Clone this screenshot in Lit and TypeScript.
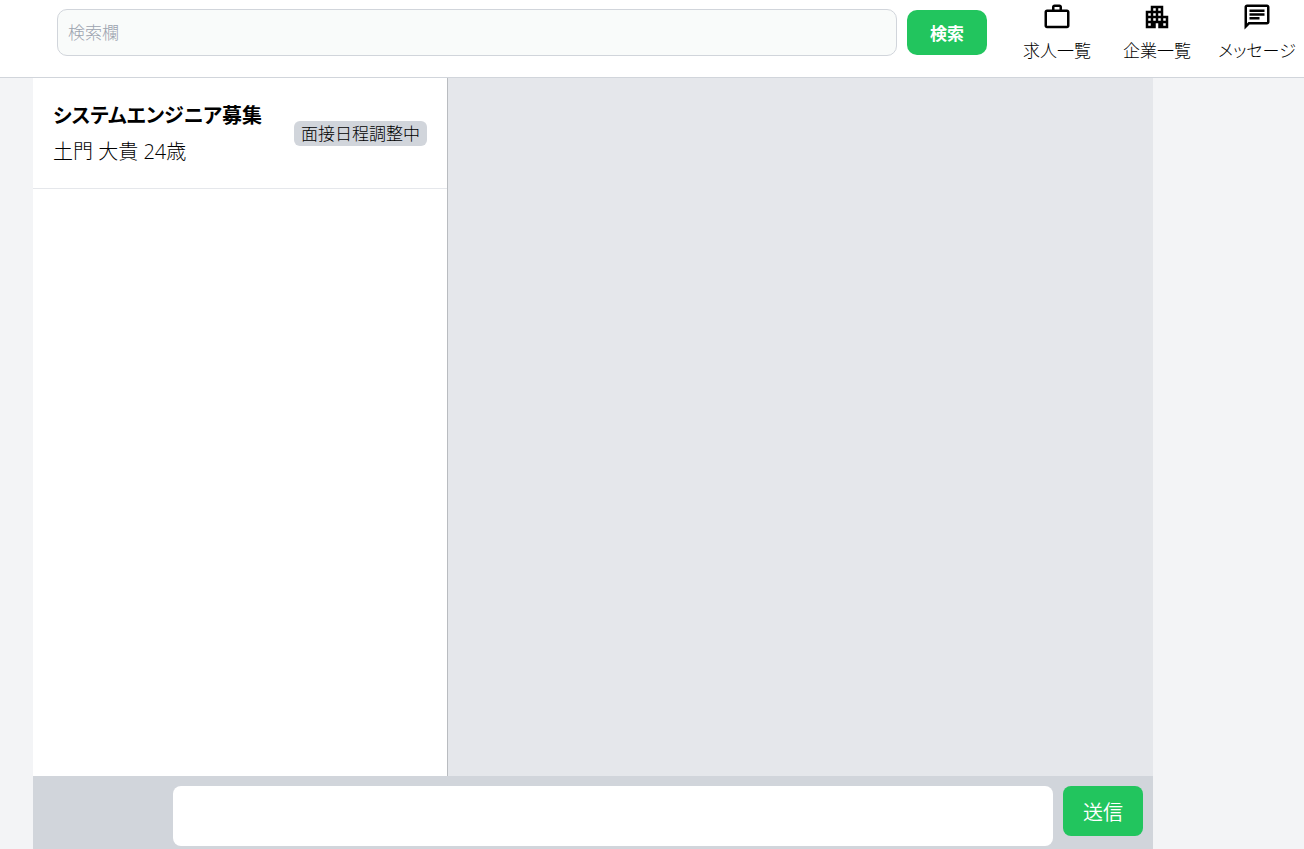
import { LitElement, html, css, svg } from "lit";
import { customElement } from "lit/decorators.js";

interface NavItem {
  label: string;
  path: string;
}

const NAV: NavItem[] = [
  {
    label: "求人一覧",
    path: "M14 6V4h-4v2h4zM4 8v11h16V8H4zm16-2c1.11 0 2 .89 2 2v11c0 1.11-.89 2-2 2H4c-1.11 0-2-.89-2-2l.01-11c0-1.11.88-2 1.99-2h4V4c0-1.11.89-2 2-2h4c1.11 0 2 .89 2 2v2h4z",
  },
  {
    label: "企業一覧",
    path: "M17 11V3H7v4H3v14h8v-4h2v4h8V11h-4zM7 19H5v-2h2v2zm0-4H5v-2h2v2zm0-4H5V9h2v2zm4 4H9v-2h2v2zm0-4H9V9h2v2zm0-4H9V5h2v2zm4 8h-2v-2h2v2zm0-4h-2V9h2v2zm0-4h-2V5h2v2zm4 12h-2v-2h2v2zm0-4h-2v-2h2v2z",
  },
  {
    label: "メッセージ",
    path: "M4 4h16v12H5.17L4 17.17V4m0-2c-1.1 0-1.99.9-1.99 2L2 22l4-4h14c1.1 0 2-.9 2-2V4c0-1.1-.9-2-2-2H4zm2 10h8v2H6v-2zm0-3h12v2H6V9zm0-3h12v2H6V6z",
  },
];

const THREADS = [
  { title: "システムエンジニア募集", person: "土門 大貴 24歳", status: "面接日程調整中" },
];

@customElement("app-root")
export class AppRoot extends LitElement {
  static styles = css`
    :host {
      display: flex;
      flex-direction: column;
      height: 100vh;
      overflow: hidden;
      background: #f3f4f6;
      color: #000;
      font-family: "Open Sans", "Noto Sans CJK JP", sans-serif;
      font-weight: 300;
      font-feature-settings: "palt";
    }
    * {
      box-sizing: border-box;
    }
    input,
    textarea,
    button {
      font: inherit;
      font-feature-settings: inherit;
      margin: 0;
    }
    .header {
      display: flex;
      flex: none;
      height: 78px;
      padding-left: 57px;
      background: #fff;
      border-bottom: 1px solid #d1d5db;
    }
    .search {
      display: flex;
      flex: 1;
      align-items: center;
      gap: 10px;
      height: 65px;
      margin-right: 20px;
    }
    .search-input {
      flex: 1;
      min-width: 0;
      height: 47px;
      padding: 0 10px;
      border: 1px solid #d1d5db;
      border-radius: 10px;
      background: #f9fbfa;
      font-size: 17px;
    }
    .search-input::placeholder {
      color: #9ca3af;
      opacity: 1;
    }
    .search-button {
      width: 80px;
      height: 45px;
      padding: 0;
      border: 0;
      border-radius: 10px;
      background: #22c55e;
      color: #fff;
      font-size: 17px;
      font-weight: 700;
    }
    .nav {
      display: flex;
      margin-right: -3px;
    }
    .nav-link {
      display: flex;
      flex-direction: column;
      align-items: center;
      width: 100px;
      padding-top: 2px;
      color: inherit;
      font-size: 17px;
      line-height: 38px;
      text-decoration: none;
      white-space: nowrap;
    }
    .nav-icon {
      width: 30px;
      height: 30px;
      fill: currentColor;
    }
    .main {
      display: flex;
      flex: 1;
      flex-direction: column;
      min-height: 0;
      margin: 0 151px 0 33px;
    }
    .panes {
      display: flex;
      flex: 1;
      min-height: 0;
    }
    .threads {
      flex: 0 0 415px;
      margin: 0;
      padding: 0;
      border-right: 1px solid #b9bcc0;
      background: #fff;
      list-style: none;
    }
    .thread {
      display: flex;
      align-items: center;
      justify-content: space-between;
      height: 111px;
      padding: 0 20px;
      border-bottom: 1px solid #e5e7eb;
    }
    .summary {
      padding-top: 2px;
    }
    .title {
      margin: 0;
      font-size: 20px;
      font-weight: 700;
      line-height: 36px;
    }
    .person {
      margin: 0;
      font-size: 20px;
      line-height: 36px;
    }
    .status {
      padding: 0 7px;
      border-radius: 6px;
      background: #d1d5db;
      font-size: 17px;
      line-height: 25px;
    }
    .conversation {
      flex: 1;
      background: #e5e7eb;
    }
    .composer {
      display: flex;
      flex: none;
      align-items: flex-start;
      justify-content: flex-end;
      gap: 10px;
      height: 73px;
      padding: 10px 10px 0 140px;
      background: #d1d5db;
    }
    .message {
      flex: 1;
      height: 60px;
      padding: 10px;
      border: 0;
      border-radius: 8px;
      background: #fff;
      font-size: 17px;
      resize: none;
    }
    .send {
      width: 80px;
      height: 50px;
      padding: 0;
      border: 0;
      border-radius: 8px;
      background: #22c55e;
      color: #fff;
      font-size: 20px;
      font-weight: 350;
    }
  `;

  render() {
    return html`
      <header class="header">
        <form class="search" role="search" @submit=${(e: Event) => e.preventDefault()}>
          <input class="search-input" type="text" placeholder="検索欄" aria-label="検索欄" />
          <button class="search-button" type="submit">検索</button>
        </form>
        <nav class="nav">
          ${NAV.map(
            (item) => html`
              <a class="nav-link" href="#">
                <svg class="nav-icon" viewBox="0 0 24 24" aria-hidden="true">
                  ${svg`<path d=${item.path}></path>`}
                </svg>
                <span>${item.label}</span>
              </a>
            `,
          )}
        </nav>
      </header>
      <main class="main">
        <div class="panes">
          <ul class="threads">
            ${THREADS.map(
              (t) => html`
                <li class="thread">
                  <div class="summary">
                    <h2 class="title">${t.title}</h2>
                    <p class="person">${t.person}</p>
                  </div>
                  <span class="status">${t.status}</span>
                </li>
              `,
            )}
          </ul>
          <section class="conversation"></section>
        </div>
        <form class="composer" @submit=${(e: Event) => e.preventDefault()}>
          <textarea class="message" aria-label="メッセージ"></textarea>
          <button class="send" type="submit">送信</button>
        </form>
      </main>
    `;
  }
}
